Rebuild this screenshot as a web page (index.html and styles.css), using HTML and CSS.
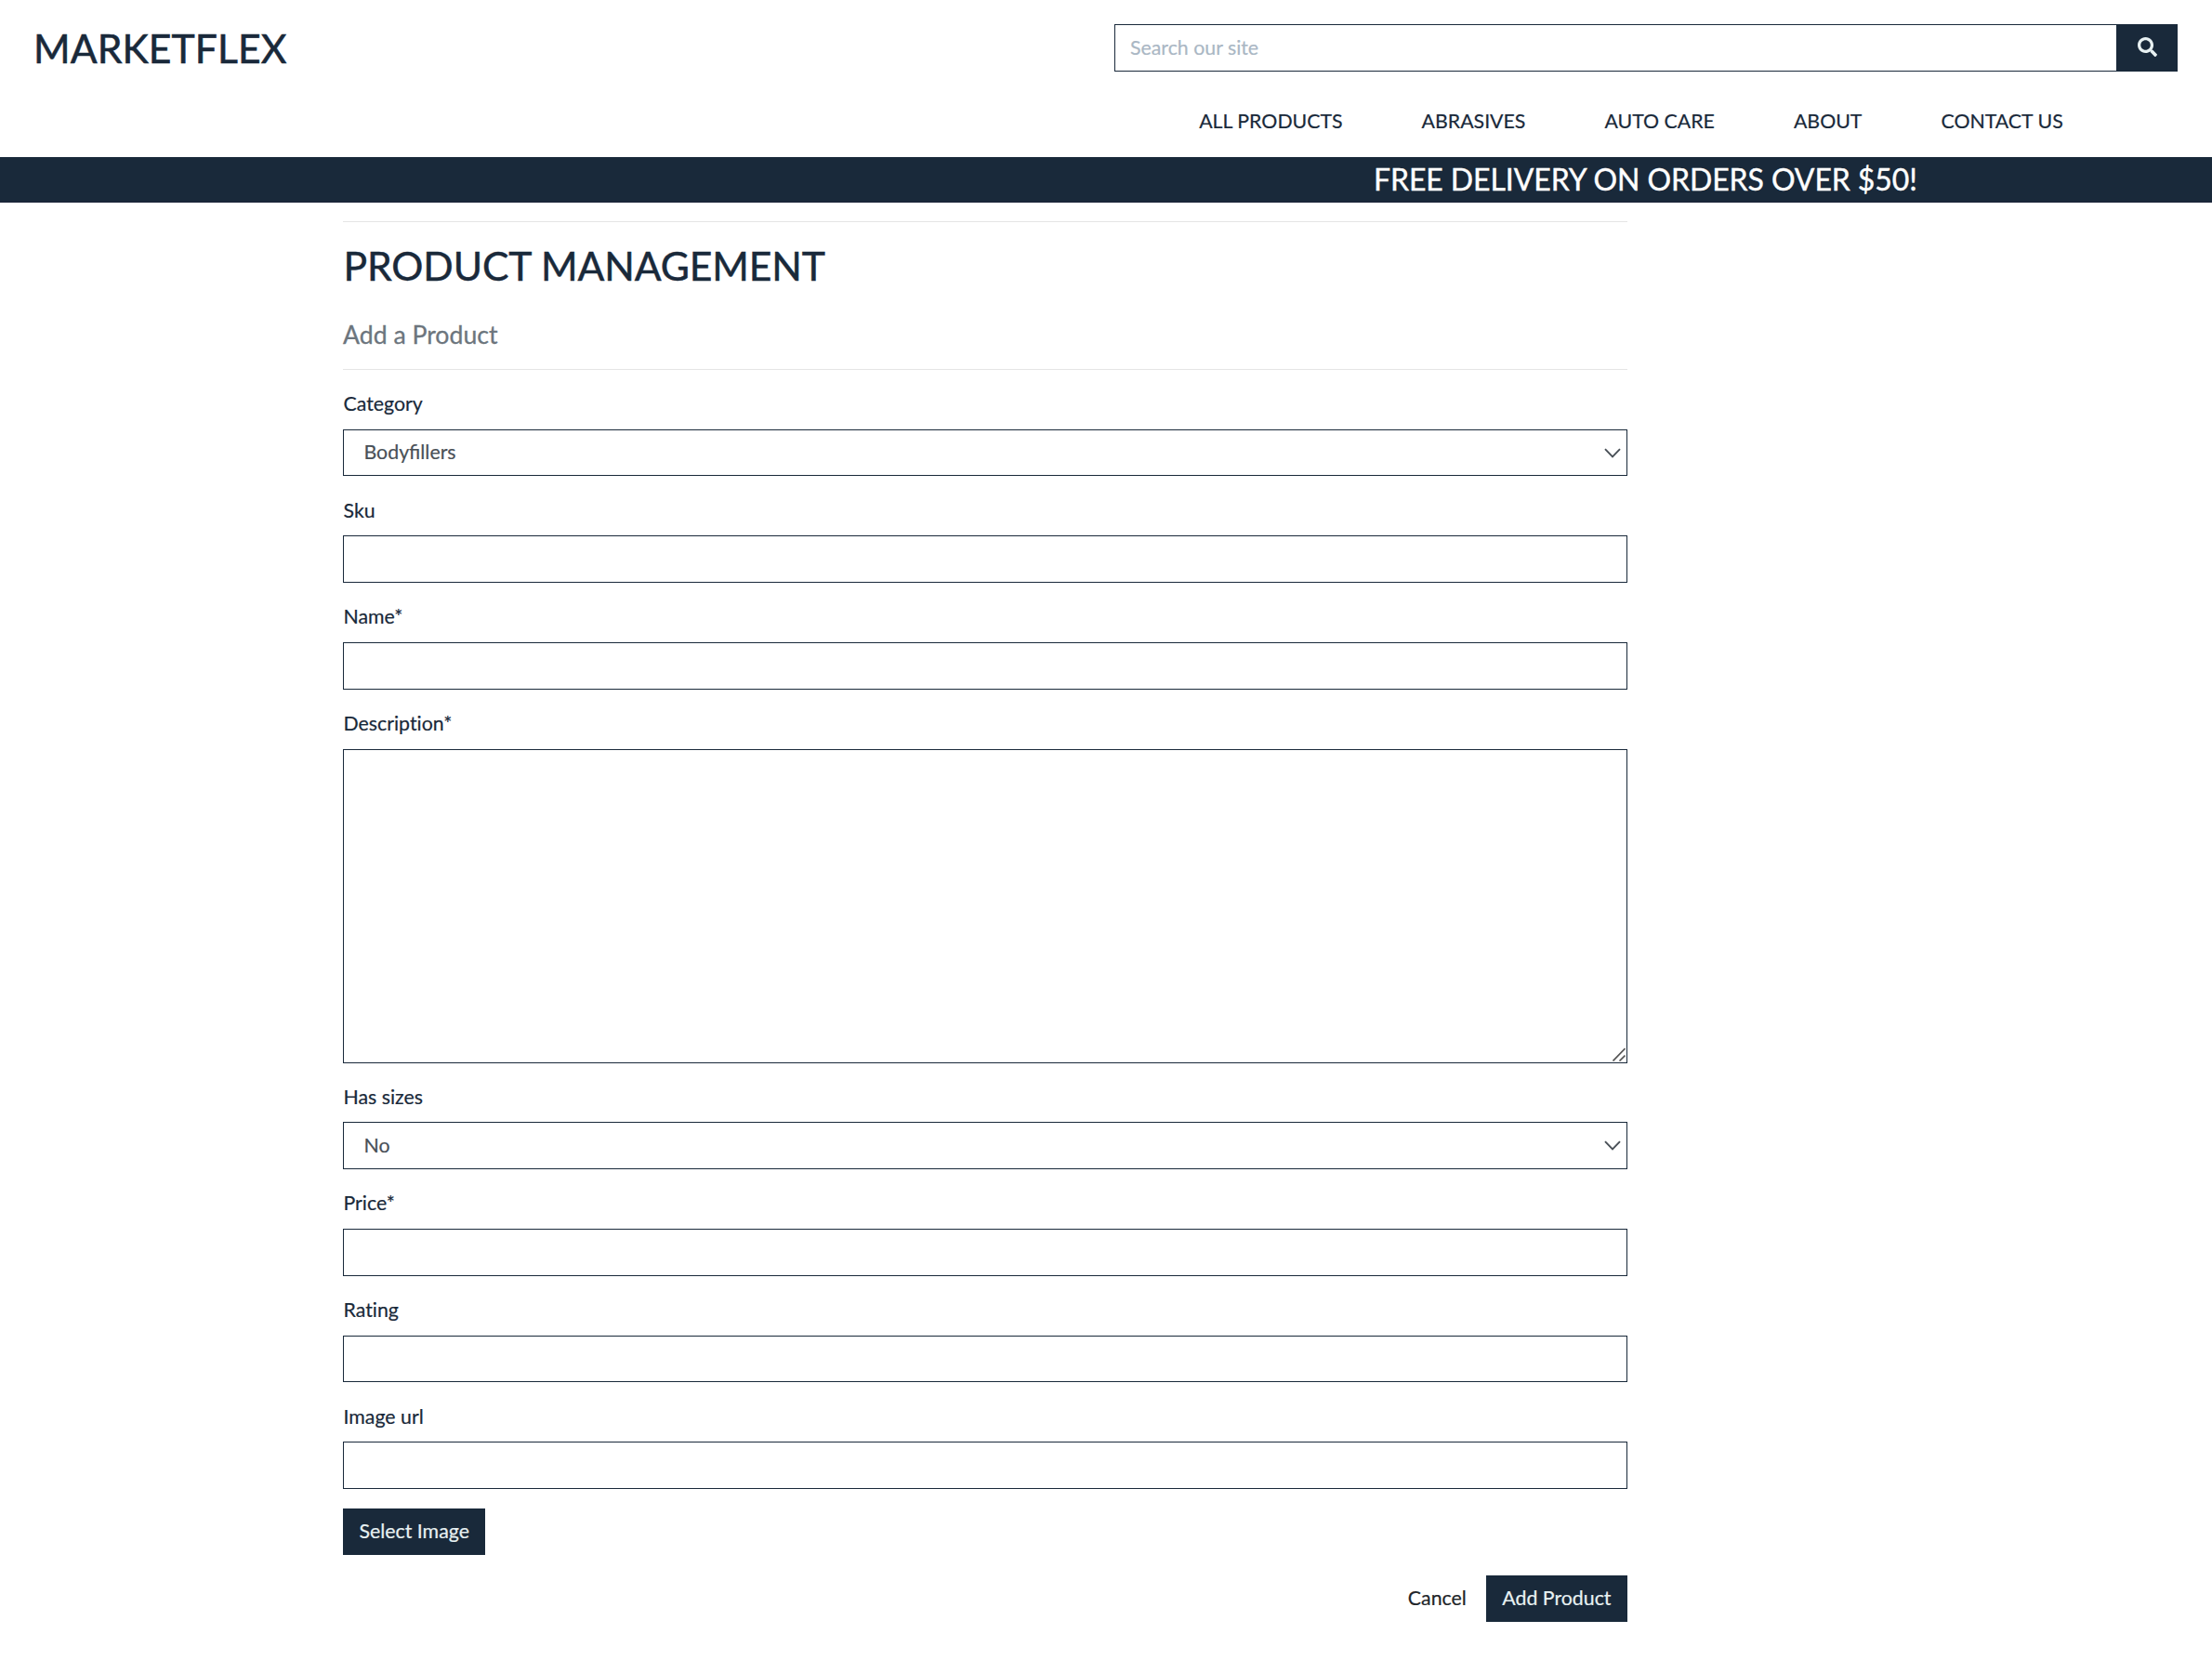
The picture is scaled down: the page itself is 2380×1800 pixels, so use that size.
FILE: index.html
```html
<!DOCTYPE html>
<html lang="en">
<head>
<meta charset="utf-8">
<title>Marketflex</title>
<link rel="stylesheet" href="styles.css">
</head>
<body>
<header class="header">
  <div class="top">
    <a class="logo">MARKETFLEX</a>
    <form class="search">
      <input class="search-input" type="text" placeholder="Search our site">
      <button class="search-btn" type="button" aria-label="Search">
        <svg class="search-icon" viewBox="0 0 512 512"><path fill="currentColor" d="M505 442.700L405.300 343c-4.500-4.500-10.600-7-17-7H372c27.600-35.300 44-79.700 44-128C416 93.100 322.900 0 208 0S0 93.100 0 208s93.100 208 208 208c48.300 0 92.700-16.400 128-44v16.300c0 6.400 2.500 12.500 7 17l99.700 99.700c9.400 9.400 24.600 9.400 33.900 0l28.300-28.300c9.400-9.400 9.400-24.600.1-34zM208 336c-70.700 0-128-57.200-128-128 0-70.700 57.200-128 128-128 70.700 0 128 57.200 128 128 0 70.700-57.200 128-128 128z"/></svg>
      </button>
    </form>
  </div>
  <nav class="nav">
    <a>ALL PRODUCTS</a><a>ABRASIVES</a><a>AUTO CARE</a><a>ABOUT</a><a>CONTACT US</a>
  </nav>
</header>
<div class="banner"><h4 class="banner-text">FREE DELIVERY ON ORDERS OVER $50!</h4></div>
<main class="content">
  <hr class="rule">
  <h2 class="title">PRODUCT MANAGEMENT</h2>
  <h5 class="subtitle">Add a Product</h5>
  <hr class="rule">
  <form class="form">
    <div class="group">
      <label class="label">Category</label>
      <div class="select-wrap">
        <select class="control select"><option>Bodyfillers</option></select>
        <svg class="chevron" viewBox="0 0 18 11"><path d="M1 1.200 9 9.400 17 1.200"/></svg>
      </div>
    </div>
    <div class="group"><label class="label">Sku</label><input class="control" type="text"></div>
    <div class="group"><label class="label">Name*</label><input class="control" type="text"></div>
    <div class="group">
      <label class="label">Description*</label>
      <div class="select-wrap">
        <textarea class="control area"></textarea>
        <svg class="grip" viewBox="0 0 14 15"><path d="M.5 14.500 13.500 1M7.500 14.500l6-6"/></svg>
      </div>
    </div>
    <div class="group">
      <label class="label">Has sizes</label>
      <div class="select-wrap">
        <select class="control select"><option>No</option></select>
        <svg class="chevron" viewBox="0 0 18 11"><path d="M1 1.200 9 9.400 17 1.200"/></svg>
      </div>
    </div>
    <div class="group"><label class="label">Price*</label><input class="control" type="text"></div>
    <div class="group"><label class="label">Rating</label><input class="control" type="text"></div>
    <div class="group group-last"><label class="label">Image url</label><input class="control" type="text"></div>
    <button class="btn" type="button">Select Image</button>
    <div class="actions"><a class="cancel">Cancel</a><button class="btn" type="button">Add Product</button></div>
  </form>
</main>
</body>
</html>
```
FILE: styles.css
```css
html { font-size: 21.325px; }
* { box-sizing: border-box; }
body {
  margin: 0;
  background: #fff;
  color: #19293a;
  font-family: Lato, "Liberation Sans", sans-serif;
  font-size: 1rem;
  line-height: 1.5;
  -webkit-text-stroke: .2px;
}
input, select, textarea, button { font: inherit; border-radius: 0; outline: 0; -webkit-text-stroke: .2px; }
h2, h4, h5 { margin: 0; font-weight: 400; line-height: 1.2; }

.header { height: 169px; padding: 26px 37px 0 36px; }
.top { display: flex; justify-content: space-between; }
.logo { font-size: 2rem; line-height: 51px; -webkit-text-stroke: .6px; letter-spacing: .1px; }
.search { display: flex; width: 1144px; height: 51px; }
.search-input {
  flex: 1;
  min-width: 0;
  padding: 0 16px;
  border: 1px solid #19293a;
  border-right: 0;
}
.search-input::placeholder { color: #aab7c4; opacity: 1; }
.search-btn {
  display: flex;
  align-items: center;
  justify-content: center;
  width: 66px;
  padding: 0 0 2px;
  border: 0;
  background: #19293a;
  color: #e8f1f2;
}
.search-icon { width: 21px; height: 21px; }
.nav { display: flex; gap: 85px; margin: 37px 0 0 1254.200px; line-height: 32px; white-space: nowrap; }

.banner {
  height: 49px;
  padding-left: 1478px;
  background: #19293a;
  border-bottom: 1px solid #1b2439;
  color: #fff;
}
.banner-text { font-size: 1.5rem; line-height: 48px; letter-spacing: -.07px; white-space: nowrap; -webkit-text-stroke: .4px; }

.content { width: 1382px; margin: 20px 0 0 369px; }
.rule { height: 1px; margin: 0; border: 0; background: #e5e5e5; }
.title { margin-top: 21px; padding-left: .5px; font-size: 2rem; letter-spacing: -.1px; -webkit-text-stroke: .5px; }
.subtitle { margin: 33px 0 21.220px; font-size: 1.25rem; color: #6c757d; -webkit-text-stroke: .3px; }
.form { padding-top: 20.800px; }
.group { display: flex; flex-direction: column; margin-bottom: 1rem; }
.group-last { margin-bottom: 21.100px; }
.label {
  margin-bottom: .56rem;
  padding-left: .5px;
  line-height: 1.440rem;
  font-feature-settings: "liga" 0;
}
.control {
  display: block;
  width: 100%;
  height: 2.375rem;
  padding: 0 16px;
  border: 1px solid #19293a;
  background: #fff;
  color: #495057;
}
.select { appearance: none; padding: .5px 21.500px 0; }
.area { height: 337.900px; resize: none; }
.select-wrap { position: relative; }
.chevron {
  position: absolute;
  top: 20px;
  right: 7px;
  width: 18px;
  height: 11px;
  fill: none;
  stroke: #495057;
  stroke-width: 1.900;
}
.grip {
  position: absolute;
  right: 2px;
  bottom: 2px;
  width: 14px;
  height: 15px;
  fill: none;
  stroke: #555;
  stroke-width: 1.700;
}
.btn {
  height: 50px;
  padding: 0 17.500px;
  border: 0;
  background: #19293a;
  color: #e8f1f2;
}
.actions { display: flex; justify-content: flex-end; align-items: center; gap: 21px; margin-top: 22px; }
.cancel { color: #212529; }
```
